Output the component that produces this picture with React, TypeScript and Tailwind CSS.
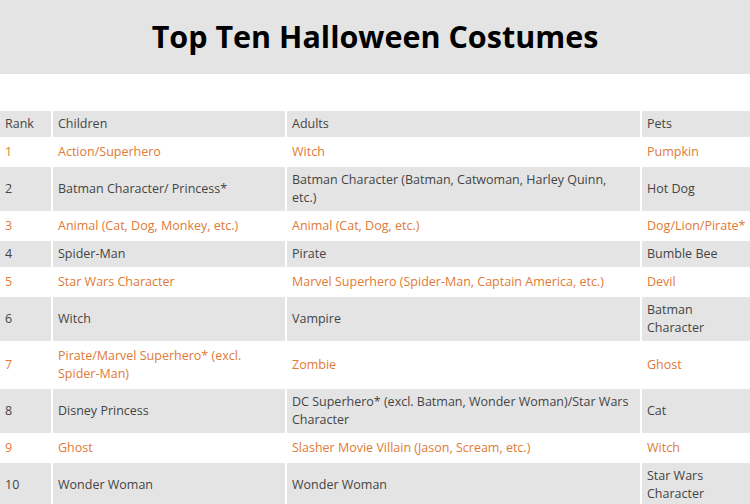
import React from 'react';

const rows = [
  { rank: '1', children: 'Action/Superhero', adults: 'Witch', pets: 'Pumpkin' },
  { rank: '2', children: 'Batman Character/ Princess*', adults: 'Batman Character (Batman, Catwoman, Harley Quinn, etc.)', pets: 'Hot Dog' },
  { rank: '3', children: 'Animal (Cat, Dog, Monkey, etc.)', adults: 'Animal (Cat, Dog, etc.)', pets: 'Dog/Lion/Pirate*' },
  { rank: '4', children: 'Spider-Man', adults: 'Pirate', pets: 'Bumble Bee' },
  { rank: '5', children: 'Star Wars Character', adults: 'Marvel Superhero (Spider-Man, Captain America, etc.)', pets: 'Devil' },
  { rank: '6', children: 'Witch', adults: 'Vampire', pets: 'Batman Character' },
  { rank: '7', children: 'Pirate/Marvel Superhero* (excl. Spider-Man)', adults: 'Zombie', pets: 'Ghost' },
  { rank: '8', children: 'Disney Princess', adults: 'DC Superhero* (excl. Batman, Wonder Woman)/Star Wars Character', pets: 'Cat' },
  { rank: '9', children: 'Ghost', adults: 'Slasher Movie Villain (Jason, Scream, etc.)', pets: 'Witch' },
  { rank: '10', children: 'Wonder Woman', adults: 'Wonder Woman', pets: 'Star Wars Character' },
];

const cell = 'border-2 border-white first:border-l-0 last:border-r-0 pl-[5px] pr-[8px] py-[4px] text-left align-middle';

export default function App() {
  return (
    <div className="w-[750px] h-[504px] overflow-hidden bg-white font-['Open_Sans',sans-serif]">
      {/* Title band */}
      <div className="h-[74px] bg-[#e4e4e4] flex items-center justify-center">
        <h1 className="text-[30.5px] font-bold text-black">Top Ten Halloween Costumes</h1>
      </div>

      {/* Table */}
      <table className="mt-[35px] w-[750px] table-fixed border-collapse text-[12.5px] leading-[18px]">
        <colgroup>
          <col className="w-[52px]" />
          <col className="w-[234px]" />
          <col className="w-[355px]" />
          <col className="w-[109px]" />
        </colgroup>
        <thead>
          <tr className="bg-[#e4e4e4] text-[#444]">
            <th className={`${cell} font-normal`}>Rank</th>
            <th className={`${cell} font-normal`}>Children</th>
            <th className={`${cell} font-normal`}>Adults</th>
            <th className={`${cell} font-normal`}>Pets</th>
          </tr>
        </thead>
        <tbody>
          {rows.map((r, i) => {
            const rowCls = i % 2 === 0 ? 'bg-white text-[#e07a36]' : 'bg-[#e4e4e4] text-[#444]';
            return (
              <tr key={r.rank} className={rowCls}>
                <td className={cell}>{r.rank}</td>
                <td className={cell}>{r.children}</td>
                <td className={cell}>{r.adults}</td>
                <td className={cell}>{r.pets}</td>
              </tr>
            );
          })}
        </tbody>
      </table>
    </div>
  );
}
